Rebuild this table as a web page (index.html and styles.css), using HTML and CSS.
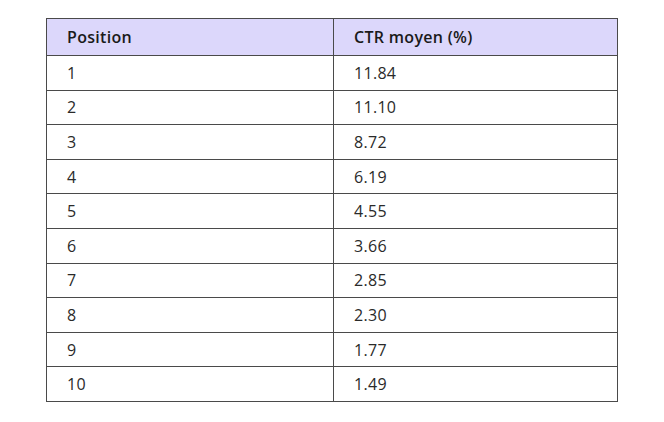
FILE: index.html
```html
<!DOCTYPE html>
<html lang="fr">
<head>
<meta charset="utf-8">
<link rel="stylesheet" href="styles.css">
</head>
<body>
<div class="page">
<table class="ctr-table">
  <thead>
    <tr><th class="col-pos">Position</th><th>CTR moyen (%)</th></tr>
  </thead>
  <tbody>
    <tr><td>1</td><td>11.84</td></tr>
    <tr><td>2</td><td>11.10</td></tr>
    <tr><td>3</td><td>8.72</td></tr>
    <tr><td>4</td><td>6.19</td></tr>
    <tr><td>5</td><td>4.55</td></tr>
    <tr><td>6</td><td>3.66</td></tr>
    <tr><td>7</td><td>2.85</td></tr>
    <tr><td>8</td><td>2.30</td></tr>
    <tr><td>9</td><td>1.77</td></tr>
    <tr><td>10</td><td>1.49</td></tr>
  </tbody>
</table>
</div>
</body>
</html>
```
FILE: styles.css
```css
html, body {
  margin: 0;
  padding: 0;
  background: #ffffff;
}
.page {
  padding: 18px 0 0 46px;
}
.ctr-table {
  border-collapse: collapse;
  width: 572px;
  font-family: "Open Sans", "Liberation Sans", sans-serif;
  font-size: 16px;
  letter-spacing: 0.3px;
  color: #1f1f1f;
  table-layout: fixed;
}
.ctr-table th,
.ctr-table td {
  border: 1px solid #4a4a4a;
  padding: 0 0 0 20px;
  text-align: left;
  vertical-align: middle;
}
.ctr-table th {
  background: #dcd7fb;
  font-weight: 600;
  height: 36px;
  color: #1a1a1a;
}
.ctr-table .col-pos {
  width: 266px;
}
.ctr-table td {
  height: 33.6px;
  font-weight: 400;
  color: #2a2a2a;
}
```
